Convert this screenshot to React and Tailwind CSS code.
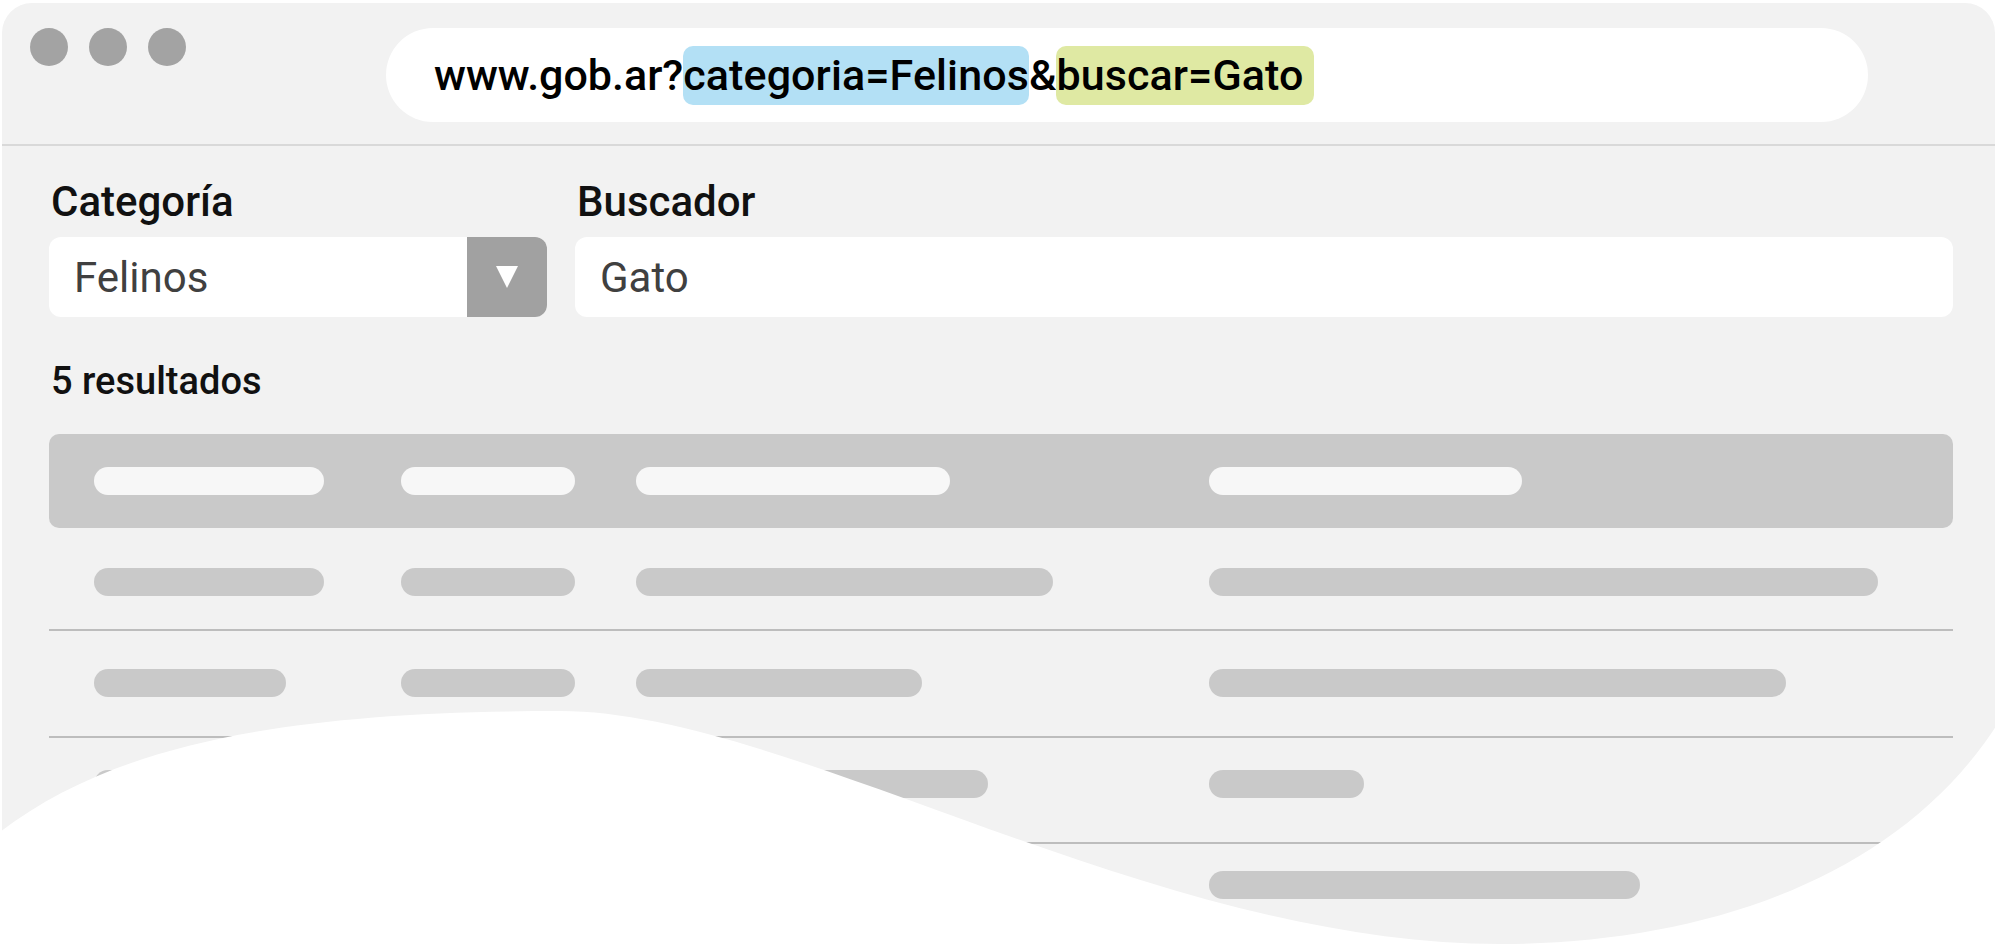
import React from "react";

const headerPills = [230, 174, 314, 313];
const rows = [
  { pills: [230, 174, 417, 669], cls: "grid grid-cols-[307px_235px_573px_1fr] pl-[45px] pt-[40px] pb-[33px] border-b-2 border-[#bdbdbd]" },
  { pills: [192, 174, 286, 577], cls: "grid grid-cols-[307px_235px_573px_1fr] pl-[45px] pt-[38px] pb-[39px] border-b-2 border-[#bdbdbd]" },
  { pills: [230, 174, 352, 155], cls: "grid grid-cols-[307px_235px_573px_1fr] pl-[45px] pt-[32px] pb-[44px] border-b-2 border-[#bdbdbd]" },
  { pills: [200, 174, 300, 431], cls: "grid grid-cols-[307px_235px_573px_1fr] pl-[45px] pt-[27px]" },
];

function Pill({ w, light }) {
  return (
    <div
      className={light ? "h-[28px] rounded-full bg-[#f7f7f7]" : "h-[28px] rounded-full bg-[#c9c9c9]"}
      style={{ width: w }}
    />
  );
}

export default function App() {
  return (
    <div className="relative w-[2000px] h-[946px] overflow-hidden bg-white font-[family-name:Roboto,sans-serif]">
      <div className="ml-[2px] mt-[3px] w-[1993px] h-[943px] rounded-t-[30px] bg-[#f2f2f2]">
        {/* browser header */}
        <div className="flex items-start h-[143px] pt-[25px] pl-[28px] border-b-2 border-[#d9d9d9]">
          <div className="flex gap-[21px]">
            <div className="w-[38px] h-[38px] rounded-full bg-[#a3a3a3]" />
            <div className="w-[38px] h-[38px] rounded-full bg-[#a3a3a3]" />
            <div className="w-[38px] h-[38px] rounded-full bg-[#a3a3a3]" />
          </div>
          <div className="ml-[200px] flex items-center w-[1482px] h-[94px] rounded-full bg-white pl-[48px] text-[43px] leading-[59px] font-medium text-black">
            <span>www.gob.ar?</span>
            <span className="rounded-[10px] bg-[#b3e0f5] tracking-[0.1px]">categoria=Felinos</span>
            <span>&amp;</span>
            <span className="rounded-[10px] bg-[#dfe9a3] pr-[10px] tracking-[0.1px]">buscar=Gato</span>
          </div>
        </div>

        {/* content */}
        <div className="pl-[47px] pr-[42px] pt-[35px]">
          <div className="flex gap-[28px]">
            <div className="flex flex-col gap-[14px] w-[498px]">
              <div className="pl-[2px] text-[42px] leading-none font-medium text-[#111]">Categoría</div>
              <div className="flex h-[80px] rounded-[12px] bg-white overflow-hidden">
                <div className="flex-1 flex items-center pl-[25px] text-[42px] text-[#404040]">Felinos</div>
                <div className="w-[80px] h-[80px] bg-[#a1a1a1] flex items-center justify-center">
                  <svg width="22" height="24" viewBox="0 0 22 24">
                    <polygon points="0,1 22,1 11,23" fill="#ffffff" />
                  </svg>
                </div>
              </div>
            </div>
            <div className="flex flex-col gap-[14px] flex-1">
              <div className="pl-[2px] text-[42px] leading-none font-medium text-[#111]">Buscador</div>
              <div className="flex items-center h-[80px] rounded-[12px] bg-white pl-[25px] text-[42px] text-[#404040]">
                Gato
              </div>
            </div>
          </div>

          <div className="mt-[45px] pl-[2px] text-[38px] leading-none font-medium text-[#111]">5 resultados</div>

          {/* table */}
          <div className="mt-[34px]">
            <div className="grid grid-cols-[307px_235px_573px_1fr] items-center h-[94px] pl-[45px] rounded-[10px] bg-[#c9c9c9]">
              {headerPills.map((w, i) => (
                <Pill key={i} w={w} light />
              ))}
            </div>
            {rows.map((r, ri) => (
              <div key={ri} className={r.cls}>
                {r.pills.map((w, i) => (
                  <Pill key={i} w={w} />
                ))}
              </div>
            ))}
          </div>
        </div>
      </div>

      {/* decorative wave overlay */}
      <svg
        className="absolute left-0 top-0 pointer-events-none"
        width="2000"
        height="946"
        viewBox="0 0 2000 946"
      >
        <path
          d="M0,832 C120,740 300,711 560,711 C790,711 1150,944 1500,944 C1700,944 1900,880 2000,720 L2000,946 L0,946 Z"
          fill="#ffffff"
        />
      </svg>
    </div>
  );
}
